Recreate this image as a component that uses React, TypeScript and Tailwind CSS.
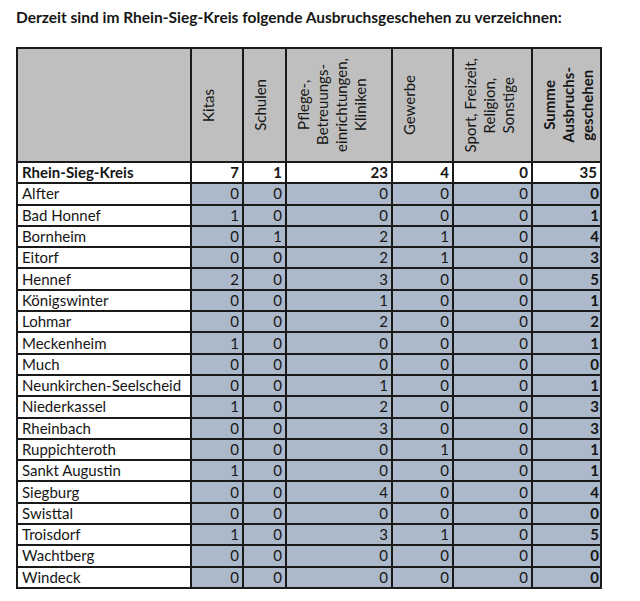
import React from "react";

const rows: [string, number[]][] = [
  ["Alfter", [0, 0, 0, 0, 0, 0]],
  ["Bad Honnef", [1, 0, 0, 0, 0, 1]],
  ["Bornheim", [0, 1, 2, 1, 0, 4]],
  ["Eitorf", [0, 0, 2, 1, 0, 3]],
  ["Hennef", [2, 0, 3, 0, 0, 5]],
  ["Königswinter", [0, 0, 1, 0, 0, 1]],
  ["Lohmar", [0, 0, 2, 0, 0, 2]],
  ["Meckenheim", [1, 0, 0, 0, 0, 1]],
  ["Much", [0, 0, 0, 0, 0, 0]],
  ["Neunkirchen-Seelscheid", [0, 0, 1, 0, 0, 1]],
  ["Niederkassel", [1, 0, 2, 0, 0, 3]],
  ["Rheinbach", [0, 0, 3, 0, 0, 3]],
  ["Ruppichteroth", [0, 0, 0, 1, 0, 1]],
  ["Sankt Augustin", [1, 0, 0, 0, 0, 1]],
  ["Siegburg", [0, 0, 4, 0, 0, 4]],
  ["Swisttal", [0, 0, 0, 0, 0, 0]],
  ["Troisdorf", [1, 0, 3, 1, 0, 5]],
  ["Wachtberg", [0, 0, 0, 0, 0, 0]],
  ["Windeck", [0, 0, 0, 0, 0, 0]],
];

const headers: { lines: string[]; bold?: boolean }[] = [
  { lines: ["Kitas"] },
  { lines: ["Schulen"] },
  { lines: ["Pflege-,", "Betreuungs-", "einrichtungen,", "Kliniken"] },
  { lines: ["Gewerbe"] },
  { lines: ["Sport, Freizeit,", "Religion,", "Sonstige"] },
  { lines: ["Summe", "Ausbruchs-", "geschehen"], bold: true },
];

const cell = "border-r-2 border-b-2 border-[#1a1a1a]";

export default function App() {
  return (
    <div
      className="w-[640px] h-[601px] bg-white text-[#161616] pl-[16px] pt-[7px]"
      style={{ fontFamily: "Lato, 'Open Sans', sans-serif" }}
    >
      <div className="text-[15.5px] font-bold leading-[20px] h-[40px]">
        Derzeit sind im Rhein-Sieg-Kreis folgende Ausbruchsgeschehen zu verzeichnen:
      </div>
      <div className="grid w-[586px] grid-cols-[174px_52px_43px_106px_61px_79px_69px] grid-rows-[114px_repeat(20,21.3px)] border-l-2 border-t-2 border-[#1a1a1a] text-[15px] leading-none">
        <div className={`${cell} bg-[#bfbfbf]`} />
        {headers.map((h, i) => (
          <div
            key={i}
            className={`${cell} bg-[#bfbfbf] flex items-center justify-start pl-[7px]`}
          >
            <div
              className={`[writing-mode:vertical-rl] rotate-180 text-center leading-[19px] whitespace-nowrap ${
                h.bold ? "font-bold" : ""
              }`}
            >
              {h.lines.map((l, j) => (
                <div key={j}>{l}</div>
              ))}
            </div>
          </div>
        ))}
        <div className={`${cell} bg-white font-bold flex items-center pl-[4px]`}>
          Rhein-Sieg-Kreis
        </div>
        {[7, 1, 23, 4, 0, 35].map((v, i) => (
          <div
            key={i}
            className={`${cell} bg-white font-bold flex items-center justify-end pr-[3px]`}
          >
            {v}
          </div>
        ))}
        {rows.map(([name, vals]) => (
          <React.Fragment key={name}>
            <div className={`${cell} bg-white flex items-center pl-[4px]`}>{name}</div>
            {vals.map((v, i) => (
              <div
                key={i}
                className={`${cell} bg-[#acb9ca] flex items-center justify-end ${
                  i === 5 ? "font-bold pr-[1px]" : "pr-[3px]"
                }`}
              >
                {v}
              </div>
            ))}
          </React.Fragment>
        ))}
      </div>
    </div>
  );
}
